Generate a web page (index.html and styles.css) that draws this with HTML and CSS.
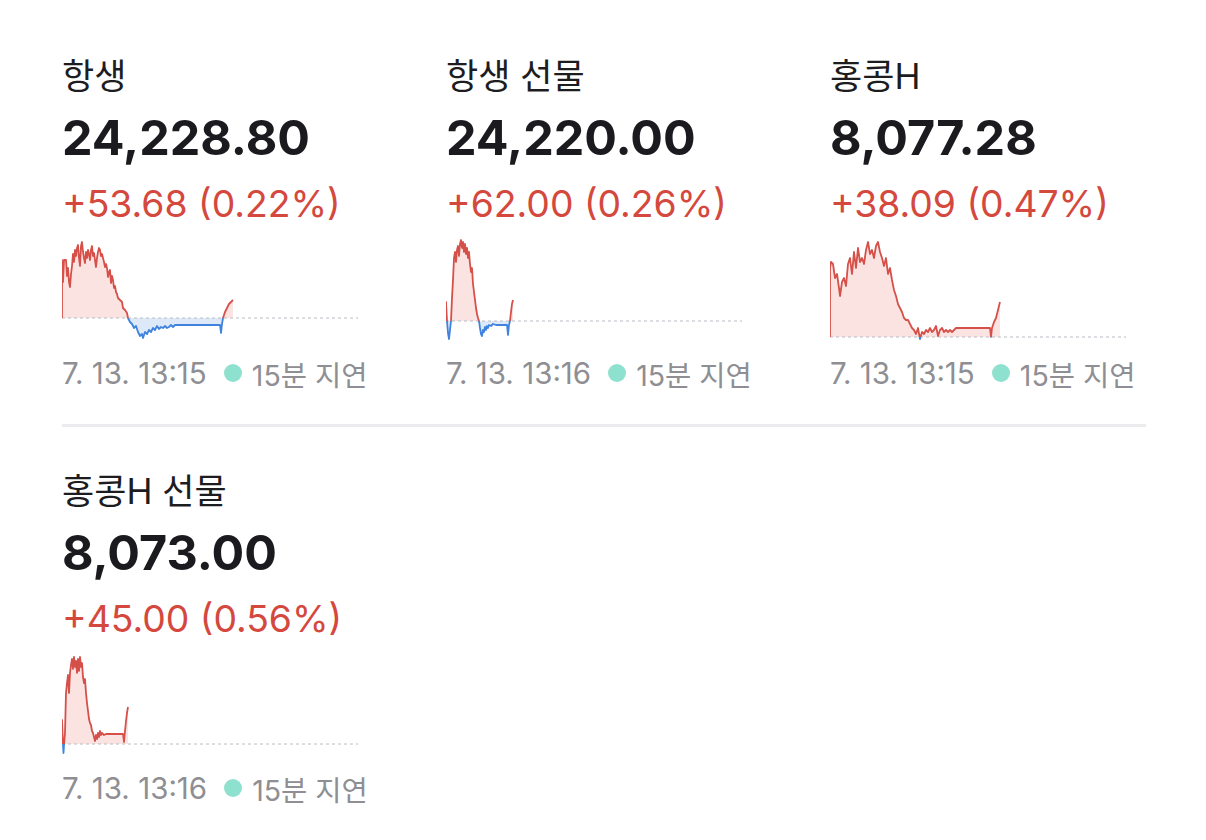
FILE: index.html
```html
<!DOCTYPE html>
<html lang="ko">
<head>
<meta charset="utf-8">
<title>홍콩 지수</title>
<link rel="stylesheet" href="styles.css">
</head>
<body>
<main class="page">
  <section class="grid">
    <article class="card">
      <div class="title">항생</div>
      <div class="price">24,228.80</div>
      <div class="change">+53.68 (0.22%)</div>
      <svg class="spark" viewBox="0 0 300 105">
        <defs>
          <clipPath id="u1"><rect x="0" y="0" width="300" height="80"/></clipPath>
          <clipPath id="d1"><rect x="0" y="80" width="300" height="25"/></clipPath>
        </defs>
        <g clip-path="url(#u1)"><polygon class="fill-up" points="0,22 1,44 2,22 4,22 5,38 6,30 7,44 8,49 9,36 10,28 11,16 12,24 13,12 14,18 15,10 16,7 17,20 18,28 19,8 20,4 21,14 22,20 23,25 24,14 25,20 26,12 27,16 28,22 29,12 30,8 31,18 32,15 33,22 34,29 35,20 36,14 37,10 38,12 39,18 40,16 41,20 42,24 43,29 44,26 45,30 46,39 47,34 48,32 49,45 50,38 51,42 52,50 53,48 54,54 55,56 56,60 58,62 60,64 61,70 63,72 65,75 66,80 68,84 70,86 72,90 74,88 76,94 78,98 80,96 81,100 83,94 85,96 87,92 89,94 91,90 93,92 95,88 97,91 99,89 101,90 103,88 105,90 107,89 109,87 111,89 113,87 158,87 159,95 160,86 161,80 163,74 165,70 167,66 169,64 171,62 171,80 0,80"/></g>
        <g clip-path="url(#d1)"><polygon class="fill-down" points="0,22 1,44 2,22 4,22 5,38 6,30 7,44 8,49 9,36 10,28 11,16 12,24 13,12 14,18 15,10 16,7 17,20 18,28 19,8 20,4 21,14 22,20 23,25 24,14 25,20 26,12 27,16 28,22 29,12 30,8 31,18 32,15 33,22 34,29 35,20 36,14 37,10 38,12 39,18 40,16 41,20 42,24 43,29 44,26 45,30 46,39 47,34 48,32 49,45 50,38 51,42 52,50 53,48 54,54 55,56 56,60 58,62 60,64 61,70 63,72 65,75 66,80 68,84 70,86 72,90 74,88 76,94 78,98 80,96 81,100 83,94 85,96 87,92 89,94 91,90 93,92 95,88 97,91 99,89 101,90 103,88 105,90 107,89 109,87 111,89 113,87 158,87 159,95 160,86 161,80 163,74 165,70 167,66 169,64 171,62 171,80 0,80"/></g>
        <line class="base" x1="0" y1="80" x2="296" y2="80"/>
        <g clip-path="url(#u1)"><polyline class="line-up" points="0,80 0,22 1,44 2,22 4,22 5,38 6,30 7,44 8,49 9,36 10,28 11,16 12,24 13,12 14,18 15,10 16,7 17,20 18,28 19,8 20,4 21,14 22,20 23,25 24,14 25,20 26,12 27,16 28,22 29,12 30,8 31,18 32,15 33,22 34,29 35,20 36,14 37,10 38,12 39,18 40,16 41,20 42,24 43,29 44,26 45,30 46,39 47,34 48,32 49,45 50,38 51,42 52,50 53,48 54,54 55,56 56,60 58,62 60,64 61,70 63,72 65,75 66,80 68,84 70,86 72,90 74,88 76,94 78,98 80,96 81,100 83,94 85,96 87,92 89,94 91,90 93,92 95,88 97,91 99,89 101,90 103,88 105,90 107,89 109,87 111,89 113,87 158,87 159,95 160,86 161,80 163,74 165,70 167,66 169,64 171,62"/></g>
        <g clip-path="url(#d1)"><polyline class="line-down" points="0,22 1,44 2,22 4,22 5,38 6,30 7,44 8,49 9,36 10,28 11,16 12,24 13,12 14,18 15,10 16,7 17,20 18,28 19,8 20,4 21,14 22,20 23,25 24,14 25,20 26,12 27,16 28,22 29,12 30,8 31,18 32,15 33,22 34,29 35,20 36,14 37,10 38,12 39,18 40,16 41,20 42,24 43,29 44,26 45,30 46,39 47,34 48,32 49,45 50,38 51,42 52,50 53,48 54,54 55,56 56,60 58,62 60,64 61,70 63,72 65,75 66,80 68,84 70,86 72,90 74,88 76,94 78,98 80,96 81,100 83,94 85,96 87,92 89,94 91,90 93,92 95,88 97,91 99,89 101,90 103,88 105,90 107,89 109,87 111,89 113,87 158,87 159,95 160,86 161,80 163,74 165,70 167,66 169,64 171,62"/></g>
      </svg>
      <div class="meta"><span>7. 13. 13:15</span><i class="dot"></i><span>15분 지연</span></div>
    </article>

    <article class="card">
      <div class="title">항생 선물</div>
      <div class="price">24,220.00</div>
      <div class="change">+62.00 (0.26%)</div>
      <svg class="spark" viewBox="0 0 300 105">
        <defs>
          <clipPath id="u2"><rect x="0" y="0" width="300" height="83"/></clipPath>
          <clipPath id="d2"><rect x="0" y="83" width="300" height="22"/></clipPath>
        </defs>
        <g clip-path="url(#u2)"><polygon class="fill-up" points="0,83 0,64 1,83 2,95 3,101 4,92 5,83 6,60 7,42 8,20 9,14 10,24 11,12 12,8 13,18 14,6 15,2 16,10 17,4 18,14 19,6 20,16 21,10 22,20 23,14 24,26 25,34 26,30 27,46 28,54 29,62 30,70 31,76 32,80 33,83 34,90 35,96 36,98 37,92 38,94 39,89 40,92 41,88 42,90 43,87 45,88 47,86 50,87 61,87 62,97 63,87 64,83 65,74 66,66 67,62 67,83"/></g>
        <g clip-path="url(#d2)"><polygon class="fill-down" points="0,83 0,64 1,83 2,95 3,101 4,92 5,83 6,60 7,42 8,20 9,14 10,24 11,12 12,8 13,18 14,6 15,2 16,10 17,4 18,14 19,6 20,16 21,10 22,20 23,14 24,26 25,34 26,30 27,46 28,54 29,62 30,70 31,76 32,80 33,83 34,90 35,96 36,98 37,92 38,94 39,89 40,92 41,88 42,90 43,87 45,88 47,86 50,87 61,87 62,97 63,87 64,83 65,74 66,66 67,62 67,83"/></g>
        <line class="base" x1="0" y1="83" x2="296" y2="83"/>
        <g clip-path="url(#u2)"><polyline class="line-up" points="0,83 0,64 1,83 2,95 3,101 4,92 5,83 6,60 7,42 8,20 9,14 10,24 11,12 12,8 13,18 14,6 15,2 16,10 17,4 18,14 19,6 20,16 21,10 22,20 23,14 24,26 25,34 26,30 27,46 28,54 29,62 30,70 31,76 32,80 33,83 34,90 35,96 36,98 37,92 38,94 39,89 40,92 41,88 42,90 43,87 45,88 47,86 50,87 61,87 62,97 63,87 64,83 65,74 66,66 67,62"/></g>
        <g clip-path="url(#d2)"><polyline class="line-down" points="0,83 0,64 1,83 2,95 3,101 4,92 5,83 6,60 7,42 8,20 9,14 10,24 11,12 12,8 13,18 14,6 15,2 16,10 17,4 18,14 19,6 20,16 21,10 22,20 23,14 24,26 25,34 26,30 27,46 28,54 29,62 30,70 31,76 32,80 33,83 34,90 35,96 36,98 37,92 38,94 39,89 40,92 41,88 42,90 43,87 45,88 47,86 50,87 61,87 62,97 63,87 64,83 65,74 66,66 67,62"/></g>
      </svg>
      <div class="meta"><span>7. 13. 13:16</span><i class="dot"></i><span>15분 지연</span></div>
    </article>

    <article class="card">
      <div class="title">홍콩H</div>
      <div class="price">8,077.28</div>
      <div class="change">+38.09 (0.47%)</div>
      <svg class="spark" viewBox="0 0 300 105">
        <defs>
          <clipPath id="u3"><rect x="0" y="0" width="300" height="99"/></clipPath>
          <clipPath id="d3"><rect x="0" y="99" width="300" height="6"/></clipPath>
        </defs>
        <g clip-path="url(#u3)"><polygon class="fill-up" points="0,99 0,30 1,24 3,26 5,40 7,36 9,50 10,58 12,44 14,40 16,48 18,26 20,20 22,36 24,14 26,30 28,10 30,24 32,20 34,26 36,12 38,4 40,16 42,12 44,20 46,8 48,4 50,14 52,20 54,28 56,20 58,36 60,30 62,42 64,52 66,58 68,66 70,70 72,74 74,80 76,82 78,82 80,86 82,90 84,92 86,96 88,90 90,101 92,94 94,96 96,92 98,94 100,90 102,94 104,92 106,88 108,98 110,92 112,90 114,94 116,92 118,94 120,92 122,94 124,92 126,90 160,90 161,99 162,90 164,84 166,80 168,72 170,64 170,99"/></g>
        <g clip-path="url(#d3)"><polygon class="fill-down" points="0,99 0,30 1,24 3,26 5,40 7,36 9,50 10,58 12,44 14,40 16,48 18,26 20,20 22,36 24,14 26,30 28,10 30,24 32,20 34,26 36,12 38,4 40,16 42,12 44,20 46,8 48,4 50,14 52,20 54,28 56,20 58,36 60,30 62,42 64,52 66,58 68,66 70,70 72,74 74,80 76,82 78,82 80,86 82,90 84,92 86,96 88,90 90,101 92,94 94,96 96,92 98,94 100,90 102,94 104,92 106,88 108,98 110,92 112,90 114,94 116,92 118,94 120,92 122,94 124,92 126,90 160,90 161,99 162,90 164,84 166,80 168,72 170,64 170,99"/></g>
        <line class="base" x1="0" y1="99" x2="296" y2="99"/>
        <g clip-path="url(#u3)"><polyline class="line-up" points="0,99 0,30 1,24 3,26 5,40 7,36 9,50 10,58 12,44 14,40 16,48 18,26 20,20 22,36 24,14 26,30 28,10 30,24 32,20 34,26 36,12 38,4 40,16 42,12 44,20 46,8 48,4 50,14 52,20 54,28 56,20 58,36 60,30 62,42 64,52 66,58 68,66 70,70 72,74 74,80 76,82 78,82 80,86 82,90 84,92 86,96 88,90 90,101 92,94 94,96 96,92 98,94 100,90 102,94 104,92 106,88 108,98 110,92 112,90 114,94 116,92 118,94 120,92 122,94 124,92 126,90 160,90 161,99 162,90 164,84 166,80 168,72 170,64"/></g>
        <g clip-path="url(#d3)"><polyline class="line-down" points="0,99 0,30 1,24 3,26 5,40 7,36 9,50 10,58 12,44 14,40 16,48 18,26 20,20 22,36 24,14 26,30 28,10 30,24 32,20 34,26 36,12 38,4 40,16 42,12 44,20 46,8 48,4 50,14 52,20 54,28 56,20 58,36 60,30 62,42 64,52 66,58 68,66 70,70 72,74 74,80 76,82 78,82 80,86 82,90 84,92 86,96 88,90 90,101 92,94 94,96 96,92 98,94 100,90 102,94 104,92 106,88 108,98 110,92 112,90 114,94 116,92 118,94 120,92 122,94 124,92 126,90 160,90 161,99 162,90 164,84 166,80 168,72 170,64"/></g>
      </svg>
      <div class="meta"><span>7. 13. 13:15</span><i class="dot"></i><span>15분 지연</span></div>
    </article>
  </section>

  <hr class="divider">

  <section class="grid">
    <article class="card">
      <div class="title">홍콩H 선물</div>
      <div class="price">8,073.00</div>
      <div class="change">+45.00 (0.56%)</div>
      <svg class="spark" viewBox="0 0 300 105">
        <defs>
          <clipPath id="u4"><rect x="0" y="0" width="300" height="91"/></clipPath>
          <clipPath id="d4"><rect x="0" y="91" width="300" height="14"/></clipPath>
        </defs>
        <g clip-path="url(#u4)"><polygon class="fill-up" points="0,91 0,67 1,91 1.5,100 2,92 3,80 4,40 5,30 6,22 7,40 8,20 9,12 10,6 11,16 12,4 13,14 14,8 15,20 16,6 17,18 18,4 19,14 20,10 21,24 22,30 23,26 24,40 25,50 26,58 27,66 28,70 29,72 30,78 31,80 32,84 33,88 34,82 35,86 36,80 37,84 38,78 39,82 40,80 42,82 44,81 61,81 62,89 63,78 64,68 65,60 66,54 66,91"/></g>
        <g clip-path="url(#d4)"><polygon class="fill-down" points="0,91 0,67 1,91 1.5,100 2,92 3,80 4,40 5,30 6,22 7,40 8,20 9,12 10,6 11,16 12,4 13,14 14,8 15,20 16,6 17,18 18,4 19,14 20,10 21,24 22,30 23,26 24,40 25,50 26,58 27,66 28,70 29,72 30,78 31,80 32,84 33,88 34,82 35,86 36,80 37,84 38,78 39,82 40,80 42,82 44,81 61,81 62,89 63,78 64,68 65,60 66,54 66,91"/></g>
        <line class="base" x1="0" y1="91" x2="296" y2="91"/>
        <g clip-path="url(#u4)"><polyline class="line-up" points="0,91 0,67 1,91 1.5,100 2,92 3,80 4,40 5,30 6,22 7,40 8,20 9,12 10,6 11,16 12,4 13,14 14,8 15,20 16,6 17,18 18,4 19,14 20,10 21,24 22,30 23,26 24,40 25,50 26,58 27,66 28,70 29,72 30,78 31,80 32,84 33,88 34,82 35,86 36,80 37,84 38,78 39,82 40,80 42,82 44,81 61,81 62,89 63,78 64,68 65,60 66,54"/></g>
        <g clip-path="url(#d4)"><polyline class="line-down" points="0,91 0,67 1,91 1.5,100 2,92 3,80 4,40 5,30 6,22 7,40 8,20 9,12 10,6 11,16 12,4 13,14 14,8 15,20 16,6 17,18 18,4 19,14 20,10 21,24 22,30 23,26 24,40 25,50 26,58 27,66 28,70 29,72 30,78 31,80 32,84 33,88 34,82 35,86 36,80 37,84 38,78 39,82 40,80 42,82 44,81 61,81 62,89 63,78 64,68 65,60 66,54"/></g>
      </svg>
      <div class="meta"><span>7. 13. 13:16</span><i class="dot"></i><span>15분 지연</span></div>
    </article>
  </section>
</main>
</body>
</html>
```

FILE: styles.css
```css
* { box-sizing: border-box; }

body {
  margin: 0;
  background: #ffffff;
  font-family: Inter, "Noto Sans CJK KR", sans-serif;
}

.page {
  padding: 54px 0 0 62px;
}

.grid {
  display: grid;
  grid-template-columns: repeat(3, 384px);
}

.card {
  display: flex;
  flex-direction: column;
}

.title {
  font-size: 35px;
  line-height: 44px;
  color: #1d1d1f;
  font-weight: 400;
}

.price {
  font-size: 48.5px;
  line-height: 80px;
  font-weight: 700;
  color: #1b1b1f;
}

.change {
  font-size: 37.3px;
  line-height: 52px;
  color: #d4483e;
}

.spark {
  display: block;
  width: 300px;
  height: 105px;
  margin-top: 8px;
  overflow: visible;
}

.fill-up { fill: #fbe3e2; stroke: none; }
.fill-down { fill: #dde9f8; stroke: none; }
.line-up, .line-down {
  fill: none;
  stroke-width: 1.8;
  stroke-linejoin: round;
}
.line-up { stroke: #d6504a; }
.line-down { stroke: #3f83de; }
.base {
  stroke: #b9bcc3;
  stroke-width: 1;
  stroke-dasharray: 3 3;
}

.meta {
  display: flex;
  align-items: center;
  height: 60px;
  font-size: 29.5px;
  color: #8e8e93;
}

.meta span:last-child {
  font-size: 28.5px;
}

.dot {
  display: block;
  width: 18px;
  height: 18px;
  border-radius: 50%;
  background: #8fe1cf;
  margin: 0 10px 0 17px;
}

.divider {
  width: 1084px;
  height: 3px;
  margin: 21px 0 42px;
  border: 0;
  background: #ececee;
}
```
